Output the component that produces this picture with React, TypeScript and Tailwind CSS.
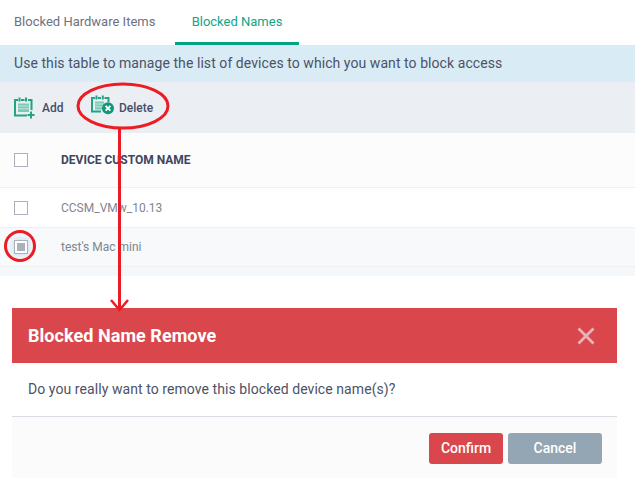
const roboto = "font-['Roboto',sans-serif]";

function AddIcon() {
  return (
    <svg width="22" height="22" viewBox="0 0 22 22" fill="none" className="shrink-0">
      <path d="M4 3H1v15.500h12M7 3h3.500M14 3h3.500V13" stroke="#1fa584" strokeWidth="2" />
      <path d="M5.500 0.500v4M12 0.500v4" stroke="#1fa584" strokeWidth="2" />
      <path d="M4 6.500h11v8.500H4z" fill="#7cc9b5" />
      <path d="M4 9h11M4 11.800h11" stroke="#d5eee7" strokeWidth="0.800" />
      <path d="M17 14.500v7M13.500 18h7" stroke="#1fa584" strokeWidth="2" />
    </svg>
  );
}

function DeleteIcon() {
  return (
    <svg width="24" height="22" viewBox="0 2 24 22" fill="none" className="shrink-0 overflow-visible">
      <path d="M4 3H1v13.500h9M7 3h3M13.500 3h4V7" stroke="#1fa584" strokeWidth="2" />
      <path d="M5.500 0.500v4M11.800 0.500v4" stroke="#1fa584" strokeWidth="2" />
      <path d="M4 6.500h9v8H4z" fill="#7cc9b5" />
      <path d="M4 9h9M4 11.800h8" stroke="#d5eee7" strokeWidth="0.800" />
      <circle cx="17" cy="13.200" r="6" fill="#14967a" />
      <path d="M14.600 10.800l4.800 4.800M19.400 10.800l-4.800 4.800" stroke="#fff" strokeWidth="1.800" />
    </svg>
  );
}

function Checkbox({ checked }: { checked?: boolean }) {
  return (
    <div className={`w-[14px] h-[14px] border border-[#a9b1bd] bg-white flex items-center justify-center shrink-0 ${checked ? "shadow-[0_0_5px_2px_#d3e4f3]" : ""}`}>
      {checked && <div className="w-[8px] h-[8px] bg-[#a9b1bd]" />}
    </div>
  );
}

export default function App() {
  return (
    <div className={`relative w-[635px] h-[481px] bg-white overflow-hidden ${roboto}`}>
      {/* Tabs */}
      <div className="flex h-[45px] text-[13px] text-[#6d7280]">
        <div className="w-[175px] pl-[14px] pt-[12px]">Blocked Hardware Items</div>
        <div className="w-[124px] border-b-[3px] border-[#04a384] pt-[12px] text-center text-[#10a587]">Blocked Names</div>
      </div>

      <div className="h-[37px] bg-[#d9ecf6] pl-[14px] flex items-center text-[14px] tracking-[0.065px] text-[#4c5266]">
        Use this table to manage the list of devices to which you want to block access
      </div>

      {/* Toolbar */}
      <div className="h-[51px] bg-[#ebeef3] flex items-center pl-[14px] text-[12px] font-medium text-[#474d68]">
        <div className="flex items-center gap-[6px] w-[77px]">
          <AddIcon />
          <span>Add</span>
        </div>
        <div className="flex items-center gap-[4px]">
          <DeleteIcon />
          <span>Delete</span>
        </div>
      </div>

      {/* Table */}
      <div className="h-[55px] bg-[#fcfcfd] border-b border-[#eef0f2] flex items-center pl-[14px]">
        <Checkbox />
        <span className="ml-[33px] text-[12px] font-bold text-[#3f4560]">DEVICE CUSTOM NAME</span>
      </div>
      <div className="h-[40px] border-b border-[#eef0f2] flex items-center pl-[14px]">
        <Checkbox />
        <span className="ml-[33px] text-[12px] text-[#80868f]">CCSM_VMw_10.13</span>
      </div>
      <div className="h-[39px] bg-[#f7f9fb] border-b border-[#eef0f2] flex items-center pl-[14px]">
        <Checkbox checked />
        <span className="ml-[33px] text-[12px] text-[#80868f]">test's Mac mini</span>
      </div>
      <div className="h-[9px] bg-[#f5f8fa]" />

      {/* Dialog */}
      <div className="mt-[32px] mx-[12px] w-[605px] h-[170px] flex flex-col">
        <div className="h-[55px] bg-[#d9474c] flex items-center justify-between pl-[16px] pr-[22px]">
          <span className="text-[18px] font-bold tracking-[0.05px] text-white">Blocked Name Remove</span>
          <svg width="18" height="18" viewBox="0 0 18 18" fill="none">
            <path d="M1.500 1.500l15 15M16.500 1.500l-15 15" stroke="#e8b4b8" strokeWidth="2.800" />
          </svg>
        </div>
        <div className="h-[54px] flex items-center pl-[16px] text-[14px] tracking-[0.07px] text-[#4c5266] border-b border-[#d7dde3]">
          Do you really want to remove this blocked device name(s)?
        </div>
        <div className="flex-1 bg-[#fbfbfb] flex justify-end gap-[5px] pt-[16px] pr-[15px]">
          <div className="w-[74px] h-[31px] pb-[1px] rounded-[3px] bg-[#d9474c] text-white text-[14px] font-medium flex items-center justify-center">Confirm</div>
          <div className="w-[94px] h-[31px] pb-[1px] rounded-[3px] bg-[#94a6b4] text-white text-[14px] font-medium flex items-center justify-center">Cancel</div>
        </div>
      </div>

      {/* Red annotations */}
      <svg width="635" height="481" className="absolute top-0 left-0 pointer-events-none" fill="none">
        <ellipse cx="123" cy="106" rx="45" ry="22" stroke="#ec1c24" strokeWidth="3" />
        <circle cx="20" cy="246" r="14.500" stroke="#ec1c24" strokeWidth="3" />
        <path d="M119.500 128V310" stroke="#ec1c24" strokeWidth="3" />
        <path d="M111 300l8.500 10 8.500-10" stroke="#ec1c24" strokeWidth="2.500" />
      </svg>
    </div>
  );
}
